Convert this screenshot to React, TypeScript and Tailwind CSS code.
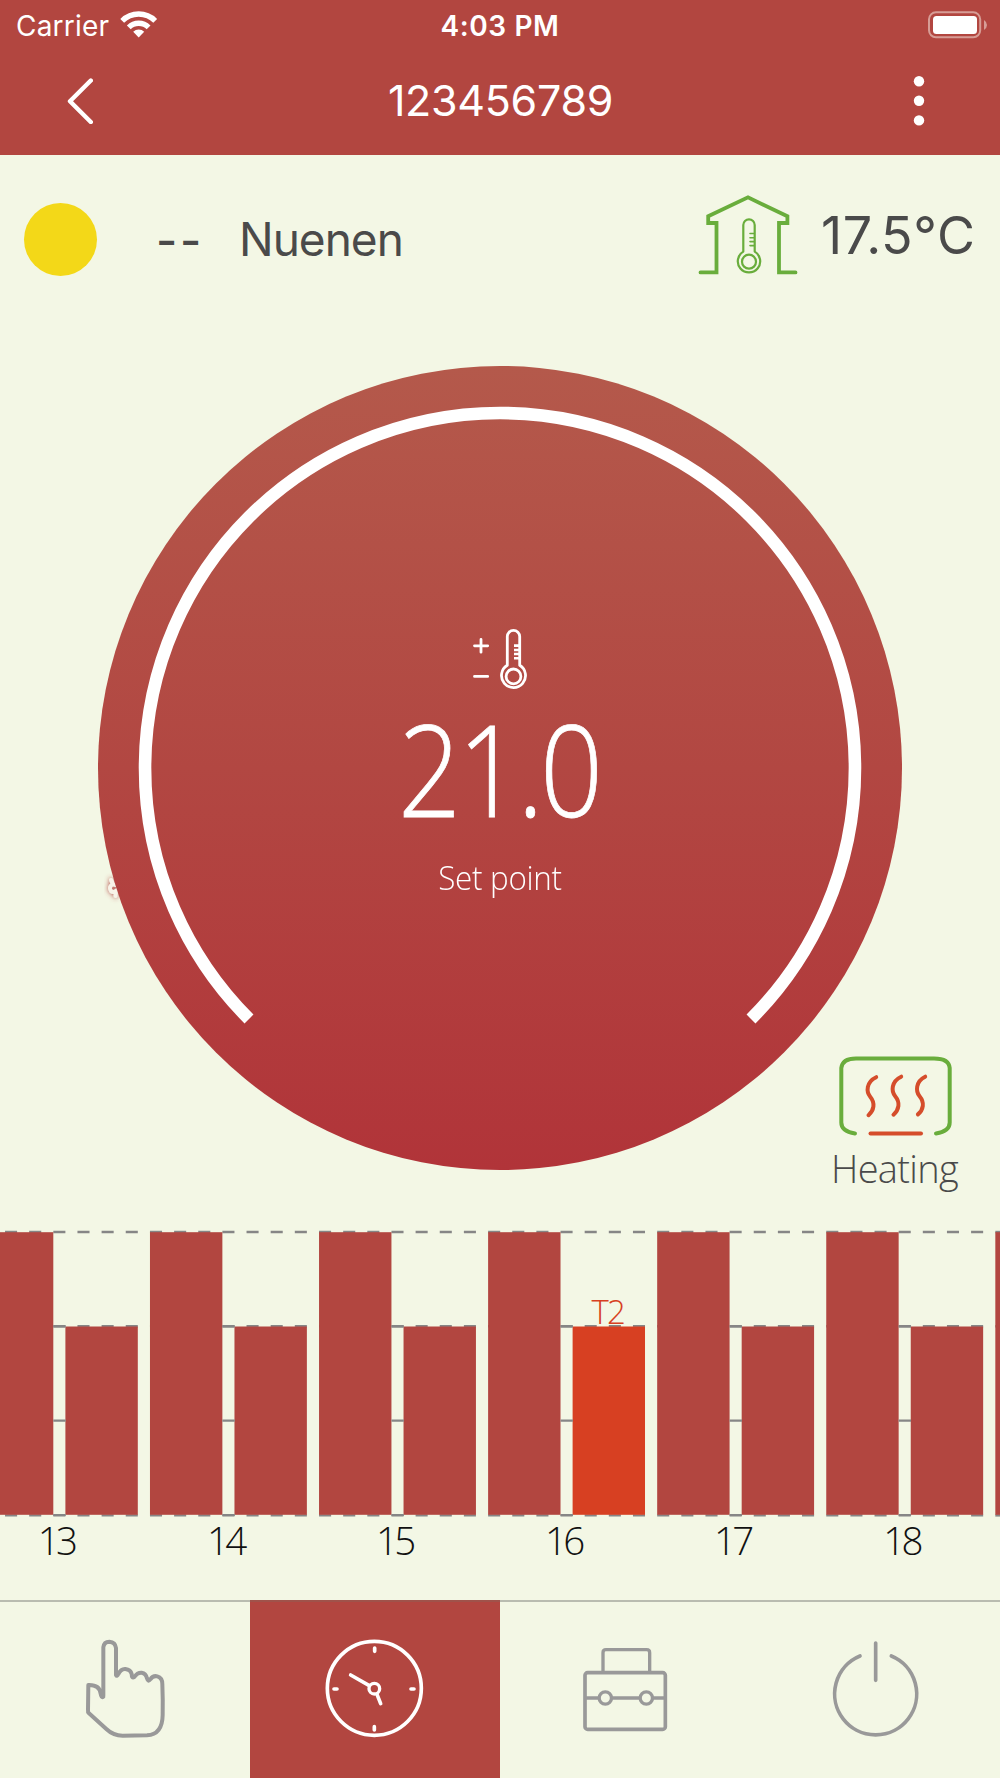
import React from 'react';

type Tab = 'manual' | 'clock' | 'toolbox' | 'power';

const HOURS = [13, 14, 15, 16, 17, 18, 19];
const ACTIVE_HOUR = 16;

// --- Chart geometry ---
const GROUP = 169.07;
const BAR = 72.4;
const GAP = 12.1;
const LEVELS = [2, 96.3, 190.7, 285];

// --- Status bar ---
const StatusBar = () => (
  <div className="grid h-[50px] grid-cols-3 items-center pl-4 pr-[13px]">
    <div className="flex items-center">
      <span className="w-[104px] whitespace-nowrap text-[28px] leading-[50px] tracking-[0.2px]">Carrier</span>
      <svg className="-mt-1" width="38" height="29" viewBox="0 0 38 29" fill="none" stroke="white" strokeWidth="5.4">
        <path d="M2.2 11.8 A23.4 23.4 0 0 1 35.2 11.8" />
        <path d="M8.8 18.4 A14 14 0 0 1 28.6 18.4" />
        <path d="M13.2 22.7 A8 8 0 0 1 24.2 22.7 L18.7 28.4 Z" fill="white" stroke="none" />
      </svg>
    </div>
    <span className="-ml-[3px] pt-px text-center text-[28px] font-semibold leading-[50px] tracking-[0.6px]">4:03 PM</span>
    <div className="-mt-px flex justify-end">
      <svg width="60" height="28" viewBox="0 0 60 28">
        <rect x="2" y="1.3" width="51.2" height="25" rx="7" fill="none" stroke="#d79d96" strokeWidth="2" />
        <rect x="6" y="5" width="44" height="18" rx="3.5" fill="white" />
        <path d="M57 9 Q60 11 60 14 Q60 17 57 19 Z" fill="#d79d96" />
      </svg>
    </div>
  </div>
);

const Header = () => (
  <header className="h-[154.5px] bg-[#b24640] text-white">
    <StatusBar />
    <div className="flex h-[104px] items-center justify-between pl-[65px] pr-[74px]">
      <svg className="-mt-[5px]" width="28" height="48" viewBox="0 0 28 48" fill="none" stroke="white" strokeWidth="4.4" strokeLinecap="round" strokeLinejoin="round">
        <path d="M25.8 4.5 L5 25.3 L25.8 46" />
      </svg>
      <h1 className="-ml-1 -mt-[3px] text-[43px] leading-none tracking-[-0.3px]">123456789</h1>
      <svg className="-mt-[2px]" width="14" height="56" viewBox="0 0 14 56" fill="white">
        <circle cx="7" cy="8.3" r="5.2" />
        <circle cx="7" cy="27.8" r="5.2" />
        <circle cx="7" cy="47.4" r="5.2" />
      </svg>
    </div>
  </header>
);

const HouseIcon = () => (
  <svg width="100" height="82" viewBox="698 194 100 82" fill="none" stroke="#69ad3c" strokeLinecap="round" strokeLinejoin="round">
    <path strokeWidth="3.8" strokeLinejoin="miter" d="M700.5 272.4 H716.5 V223 H708.2 V216.2 L748 197.4 L787.4 216.2 V223 H779 V272.4 H795.5" />
    <path strokeWidth="2.2" d="M743.3 251.6 V225 A5.7 5.7 0 0 1 754.7 225 V251.6 A11.2 11.2 0 1 1 743.3 251.6 Z" />
    <circle strokeWidth="2.2" cx="749" cy="261.7" r="7" />
    <path strokeWidth="1.6" d="M750 233.5 H754 M750 237.7 H754 M750 241.6 H754 M750 245.6 H754" />
  </svg>
);

const Weather = () => (
  <section className="flex h-[169.5px] items-start text-[#4a4a4a]">
    <div className="ml-6 mt-[48.5px] h-[73px] w-[73px] rounded-full bg-[#f3d818]" />
    <span className="ml-[59px] mt-[58.5px] w-[83px] whitespace-nowrap text-[46px] font-medium leading-[54px] tracking-[2.8px]">--</span>
    <span className="mt-[57.5px] w-[459px] text-[46px] leading-[54px] tracking-[-1px]">Nuenen</span>
    <div className="mt-[39.5px]">
      <HouseIcon />
    </div>
    <span className="ml-[23px] mt-[51.5px] whitespace-nowrap text-[52px] leading-[60px] tracking-[0.6px]">17.5°C</span>
  </section>
);

const SetPointIcon = () => (
  <svg className="absolute left-[374px] top-[262px]" width="56" height="64" viewBox="472 628 56 64" fill="none" stroke="white" strokeWidth="2.8" strokeLinecap="round">
    <path d="M474.5 645.8 H487.7 M481 639.4 V652.2 M474.5 676.4 H487.7" />
    <path strokeLinejoin="round" d="M507.3 665.3 V636.6 A6.2 6.2 0 0 1 519.7 636.6 V665.3 A12 12 0 1 1 507.3 665.3 Z" />
    <circle cx="513.5" cy="676.4" r="7.4" />
    <path strokeLinecap="butt" strokeWidth="2.6" d="M514 645.6 H520 M514 650 H520 M514 654 H520 M514 658.2 H520" />
  </svg>
);

const Heating = () => (
  <div className="absolute left-[732px] top-[688px] flex w-[130px] flex-col items-center">
    <svg width="116" height="84" viewBox="837 1054 116 84" fill="none" strokeWidth="4" strokeLinecap="round">
      <path stroke="#69ad3c" d="M855 1133.4 Q841.3 1131.5 841.3 1122.5 V1068 Q842.3 1058.4 856 1058.4 H934 Q949 1058.4 949.7 1068 V1122.5 Q949.7 1131.5 936 1133.4" />
      <g stroke="#d54d2b">
        <path d="M870.5 1133.4 H921" />
        <path d="M876.2 1077.2 C866 1082 866.2 1092 870.2 1096.7 C875.5 1103 874 1110.5 868.5 1115.2" />
        <path d="M901.2 1076.7 C891 1081.5 891.2 1091.5 895.2 1096.2 C900.5 1102.5 899 1110 893.5 1114.7" />
        <path d="M925.2 1076.7 C915.4 1081.5 915.6 1091.5 919.6 1096.2 C924.9 1102.5 923.4 1109.8 917.9 1114.4" />
      </g>
    </svg>
    <span className="-ml-px mt-[7px] whitespace-nowrap font-['Open_Sans'] text-[38px] font-light leading-[46px] tracking-[-0.7px] text-[#4a4a4a]">Heating</span>
  </div>
);

const Dial = () => (
  <div className="relative mx-auto mt-[42px] h-[804px] w-[804px]">
    <svg className="absolute -left-4 top-0 overflow-visible" width="820" height="804" viewBox="82 366 820 804">
      <defs>
        <linearGradient id="dial" x1="0" y1="0" x2="0" y2="1">
          <stop offset="0" stopColor="#b4594b" />
          <stop offset="0.5" stopColor="#b24742" />
          <stop offset="1" stopColor="#b13439" />
        </linearGradient>
        <filter id="glow" x="-50%" y="-50%" width="200%" height="200%">
          <feDropShadow dx="0" dy="0" stdDeviation="2.4" floodColor="#b24540" />
        </filter>
      </defs>
      {/* handle of the control, mostly hidden behind the dial */}
      <path filter="url(#glow)" fill="none" stroke="#f8f3e8" strokeWidth="4" strokeLinecap="round" d="M111 880 L113 884 Q108 887 111 891 Q113 893 116 891 L115.5 896 M112 884 L120 886" />
      <circle cx="500" cy="768" r="402" fill="url(#dial)" />
      <path d="M249 1019 A355 355 0 1 1 751 1019" fill="none" stroke="white" strokeWidth="12.6" />
    </svg>
    <SetPointIcon />
    <div className="relative flex flex-col items-center pt-[332px] font-['Open_Sans'] font-light text-white">
      <span className="-ml-0.5 scale-x-[0.87] text-[127px] leading-[140px] tracking-[-4px] [-webkit-text-stroke:0.8px_white]">21.0</span>
      <span className="mt-[18px] scale-x-[0.95] text-[33px] leading-[44px] tracking-[-0.3px]">Set point</span>
    </div>
    <Heating />
  </div>
);

const Chart = () => (
  <svg className="mt-[60px] block font-['Open_Sans'] font-light" width="1000" height="370" viewBox="0 0 1000 370">
    {HOURS.map((hour, i) => {
      const x = -19.1 + i * GROUP;
      const gapX = x + BAR;
      const active = hour === ACTIVE_HOUR;
      return (
        <g key={hour}>
          <g stroke="#868686" strokeWidth="2.4" strokeDasharray="12.07 12.07">
            <path d={`M${x} ${LEVELS[0]} h156.9`} />
            <path d={`M${x} ${LEVELS[1]} h156.9`} />
            <path d={`M${x} ${LEVELS[3] + 0.4} h156.9`} />
          </g>
          <rect x={x} y={LEVELS[0] + 0.2} width={BAR} height={LEVELS[3] - LEVELS[0] - 0.4} fill="#b24640" />
          <rect x={gapX + GAP} y={LEVELS[1] + 0.2} width={BAR} height={LEVELS[3] - LEVELS[1] - 0.4} fill={active ? '#d74022' : '#b24640'} />
          <path d={`M${gapX} ${LEVELS[1]} h12.4 M${gapX} ${LEVELS[2]} h12.4 M${gapX} ${LEVELS[3]} h12.4`} stroke="#868686" strokeWidth="2.2" />
          {active && (
            <text x={gapX + GAP + BAR / 2 - 1} y="94" textAnchor="middle" fontSize="33" letterSpacing="-1.8" fill="#d74022">T2</text>
          )}
          {gapX < 1000 && (
            <text x={gapX + 2.8} y="325.2" textAnchor="middle" fontSize="38.5" letterSpacing="-3.7" fill="#111">{hour}</text>
          )}
        </g>
      );
    })}
  </svg>
);

// --- Bottom tabs ---
const TAB_ICONS: Record<Tab, React.ReactNode> = {
  manual: (
    <path strokeWidth="12" d="M160 317 V172 Q162 155 178 155 Q196 156 198 174 V255 Q201 261 205 252 Q213 236 226 237 Q242 239 245 252 Q245 266 253 261 Q262 247 275 248 Q288 250 291 265 Q294 277 301 268 Q309 256 322 259 Q337 263 337 282 Q339 330 338 375 Q337 434 291 436 L218 437 Q190 437 169 417 L117 370 Q113 366 114 360 L115 285 Q149 284 152 311 Q154 325 160 320" />
  ),
  clock: (
    <>
      <circle cx="973" cy="295" r="141" strokeWidth="11" />
      <circle cx="973" cy="296" r="16" strokeWidth="10" />
      <path strokeWidth="11" d="M902 255 L958 287 M981 313 L992 341 M974 174 V184 M973 410 V420 M852 297 H861 M1083 297 H1092" />
    </>
  ),
  toolbox: (
    <>
      <path strokeWidth="10" d="M159 243 V188 Q159 179 168 179 H290 Q299 179 299 188 V243" />
      <rect x="105" y="248" width="241" height="170" rx="8" strokeWidth="11" />
      <path strokeWidth="10" strokeLinecap="butt" d="M105 324 H147 M185 324 H271 M309 324 H346" />
      <circle cx="166" cy="324" r="18.5" strokeWidth="10" />
      <circle cx="289" cy="324" r="18.5" strokeWidth="10" />
    </>
  ),
  power: (
    <path strokeWidth="11" d="M977 159 V271 M930 198 A123 123 0 1 0 1024 198" />
  ),
};

const TABS: { id: Tab; viewBox: string }[] = [
  { id: 'manual', viewBox: '-150 36 750 528' },
  { id: 'clock', viewBox: '600 36 750 528' },
  { id: 'toolbox', viewBox: '-150 36 750 528' },
  { id: 'power', viewBox: '600 36 750 528' },
];

const TabBar = ({ active }: { active: Tab }) => (
  <nav className="grid h-[178px] grid-cols-4">
    {TABS.map(({ id, viewBox }) => (
      <button
        key={id}
        aria-label={id}
        className={active === id ? 'border-t-2 border-[#a0524a] bg-[#b24640] text-white' : 'border-t-2 border-[#b9bcb0] text-[#999]'}
      >
        <svg className="block" width="250" height="176" viewBox={viewBox} fill="none" stroke="currentColor" strokeLinecap="round" strokeLinejoin="round">
          {TAB_ICONS[id]}
        </svg>
      </button>
    ))}
  </nav>
);

// --- Main App ---
export default function App() {
  return (
    <div className="h-[1778px] w-[1000px] overflow-hidden bg-[#f3f7e5] font-['Inter',sans-serif]">
      <Header />
      <Weather />
      <Dial />
      <Chart />
      <TabBar active="clock" />
    </div>
  );
}
